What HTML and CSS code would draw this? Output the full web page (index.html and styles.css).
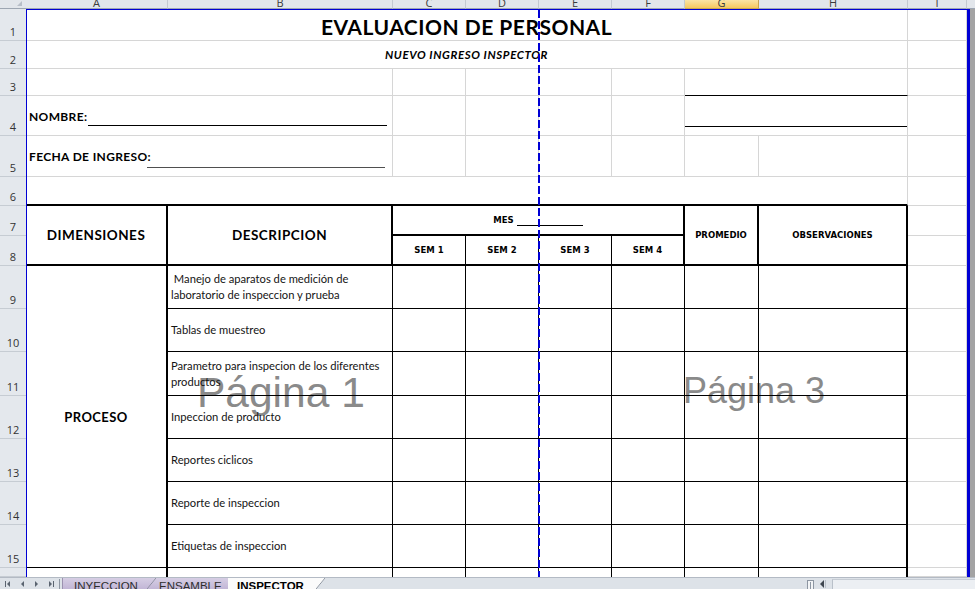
FILE: index.html
```html
<!DOCTYPE html>
<html lang="es">
<head>
<meta charset="utf-8">
<title>EVALUACION DE PERSONAL</title>
<link rel="stylesheet" href="styles.css">
</head>
<body>
<div class="app">
  <div class="viewport">
    <div class="colhdr">
      <div class="corner"><span class="tri"></span></div>
      <div class="ch">A</div>
      <div class="ch">B</div>
      <div class="ch">C</div>
      <div class="ch">D</div>
      <div class="ch">E</div>
      <div class="ch">F</div>
      <div class="ch sel">G</div>
      <div class="ch">H</div>
      <div class="ch">I</div>
      <div class="ch end"></div>
    </div>

    <div class="sheet">
      <!-- row 1 -->
      <div class="rh">1</div>
      <div class="c s8 title">EVALUACION DE PERSONAL</div>
      <div class="c"></div><div class="x"></div>
      <!-- row 2 -->
      <div class="rh">2</div>
      <div class="c s8 subtitle">NUEVO INGRESO INSPECTOR</div>
      <div class="c"></div><div class="x"></div>
      <!-- row 3 -->
      <div class="rh">3</div>
      <div class="c s2"></div>
      <div class="c"></div><div class="c"></div><div class="c"></div><div class="c"></div>
      <div class="c s2 blkb"></div>
      <div class="c"></div><div class="x"></div>
      <!-- row 4 -->
      <div class="rh">4</div>
      <div class="c s2 field f-name"><span class="lbl">NOMBRE:</span><span class="blank"></span></div>
      <div class="c"></div><div class="c"></div><div class="c"></div><div class="c"></div>
      <div class="c s2 sigline"><span></span></div>
      <div class="c"></div><div class="x"></div>
      <!-- row 5 -->
      <div class="rh">5</div>
      <div class="c s2 field f-date"><span class="lbl">FECHA DE INGRESO:</span><span class="blank"></span></div>
      <div class="c"></div><div class="c"></div><div class="c"></div><div class="c"></div>
      <div class="c"></div><div class="c"></div>
      <div class="c"></div><div class="x"></div>
      <!-- row 6 -->
      <div class="rh">6</div>
      <div class="c s8 topb"></div>
      <div class="c"></div><div class="x"></div>
      <!-- row 7 -->
      <div class="rh">7</div>
      <div class="c r2 t2 hd">DIMENSIONES</div>
      <div class="c r2 t2 hd">DESCRIPCION</div>
      <div class="c s4 t2 sm mes"><span>MES&nbsp;</span><span class="mesline"></span></div>
      <div class="c r2 t2 sm">PROMEDIO</div>
      <div class="c r2 t2 sm">OBSERVACIONES</div>
      <div class="c"></div><div class="x"></div>
      <!-- row 8 -->
      <div class="rh">8</div>
      <div class="c t1 sm">SEM 1</div>
      <div class="c t1 sm">SEM 2</div>
      <div class="c t1 sm">SEM 3</div>
      <div class="c t2 sm">SEM 4</div>
      <div class="c"></div><div class="x"></div>
      <!-- row 9 -->
      <div class="rh">9</div>
      <div class="c r7 ba proc">PROCESO</div>
      <div class="c b d">&nbsp;Manejo de aparatos de medición de<br>laboratorio de inspeccion y prueba</div>
      <div class="c b"></div><div class="c b"></div><div class="c b"></div><div class="c b"></div><div class="c b"></div>
      <div class="c b bh"></div>
      <div class="c"></div><div class="x"></div>
      <!-- row 10 -->
      <div class="rh">10</div>
      <div class="c b d">Tablas de muestreo</div>
      <div class="c b"></div><div class="c b"></div><div class="c b"></div><div class="c b"></div><div class="c b"></div>
      <div class="c b bh"></div>
      <div class="c"></div><div class="x"></div>
      <!-- row 11 -->
      <div class="rh">11</div>
      <div class="c b d">Parametro para inspecion de los diferentes<br>productos</div>
      <div class="c b"></div><div class="c b"></div><div class="c b"></div><div class="c b"></div><div class="c b"></div>
      <div class="c b bh"></div>
      <div class="c"></div><div class="x"></div>
      <!-- row 12 -->
      <div class="rh">12</div>
      <div class="c b d">Inpeccion de producto</div>
      <div class="c b"></div><div class="c b"></div><div class="c b"></div><div class="c b"></div><div class="c b"></div>
      <div class="c b bh"></div>
      <div class="c"></div><div class="x"></div>
      <!-- row 13 -->
      <div class="rh">13</div>
      <div class="c b d">Reportes ciclicos</div>
      <div class="c b"></div><div class="c b"></div><div class="c b"></div><div class="c b"></div><div class="c b"></div>
      <div class="c b bh"></div>
      <div class="c"></div><div class="x"></div>
      <!-- row 14 -->
      <div class="rh">14</div>
      <div class="c b d">Reporte de inspeccion</div>
      <div class="c b"></div><div class="c b"></div><div class="c b"></div><div class="c b"></div><div class="c b"></div>
      <div class="c b bh"></div>
      <div class="c"></div><div class="x"></div>
      <!-- row 15 -->
      <div class="rh">15</div>
      <div class="c b d">Etiquetas de inspeccion</div>
      <div class="c b"></div><div class="c b"></div><div class="c b"></div><div class="c b"></div><div class="c b"></div>
      <div class="c b bh"></div>
      <div class="c"></div><div class="x"></div>
      <!-- row 16 (partial) -->
      <div class="rh"></div>
      <div class="c ba nb"></div>
      <div class="c b nb"></div>
      <div class="c b nb"></div><div class="c b nb"></div><div class="c b nb"></div><div class="c b nb"></div><div class="c b nb"></div>
      <div class="c b bh nb"></div>
      <div class="c"></div><div class="x"></div>
    </div>

    <div class="wm wm1">Página 1</div>
    <div class="wm wm3">Página 3</div>
    <div class="printarea"></div>
    <div class="pagebreak"></div>
  </div>

  <div class="tabbar">
    <svg class="nav" width="58" height="11" viewBox="0 0 58 11">
      <rect x="5" y="3" width="1" height="6" fill="#5b6470"/>
      <polygon points="10,3 10,9 7,6" fill="#5b6470"/>
      <polygon points="24,3 24,9 21,6" fill="#5b6470"/>
      <polygon points="35,3 35,9 38,6" fill="#5b6470"/>
      <polygon points="49,3 49,9 52,6" fill="#5b6470"/>
      <rect x="53" y="3" width="1" height="6" fill="#5b6470"/>
    </svg>
    <span class="navsep"></span>
    <div class="tab tab1">INYECCION</div>
    <div class="tab tab2">ENSAMBLE</div>
    <div class="tab tab3">INSPECTOR</div>
    <div class="spacer"></div>
    <div class="split"><span></span></div>
    <svg class="larr" width="7" height="11" viewBox="0 0 7 11">
      <polygon points="5,2 5,10 1,6" fill="#3f4650"/>
      <rect x="6" y="2" width="1" height="8" fill="#b9c0c9"/>
    </svg>
    <div class="hscroll"></div>
  </div>
</div>
</body>
</html>
```

FILE: styles.css
```css
:root {
  --cols: 26px 142px 225px 73px 73px 73px 73px 74px 149px 59px 8px;
  --grid: #d6d6d6;
  --blue: #0000d4;
}

* { box-sizing: border-box; }

html, body {
  margin: 0;
  padding: 0;
}

body {
  width: 975px;
  height: 589px;
  overflow: hidden;
  background: #ffffff;
  font-family: "Lato", "Liberation Sans", sans-serif;
  color: #000;
}

.app {
  display: flex;
  flex-direction: column;
  width: 975px;
  height: 589px;
}

.viewport {
  position: relative;
  height: 577px;
  overflow: hidden;
  background: #ffffff;
}

/* ---------- column headers ---------- */
.colhdr {
  position: relative;
  z-index: 1;
  display: grid;
  grid-template-columns: var(--cols);
  height: 9px;
}

.corner,
.ch {
  height: 9px;
  background: #e2e6eb;
  border-right: 1px solid #c3c9d1;
  border-bottom: 1px solid #9da6b2;
  overflow: hidden;
}

.corner {
  display: flex;
  align-items: flex-end;
  justify-content: flex-end;
  padding: 0 4px 2px 0;
  border-right: none;
}

.tri {
  width: 0;
  height: 0;
  border-left: 5px solid transparent;
  border-bottom: 5px solid #b7bec8;
}

.ch {
  display: flex;
  justify-content: center;
  align-items: flex-end;
  font-family: "Open Sans", "Liberation Sans", sans-serif;
  font-size: 11px;
  line-height: 11px;
  color: #3c3c3c;
}

.ch.sel {
  background: linear-gradient(#fbe4a6, #f6c860);
  border-right-color: #c9a552;
  border-bottom-color: #c9a552;
}

.ch.end { border-right: none; }

/* ---------- sheet grid ---------- */
.sheet {
  position: relative;
  z-index: 1;
  display: grid;
  grid-template-columns: var(--cols);
  grid-template-rows: 32px 28px 27px 40px 41px 29px 30px 30px 43px 43px 44px 43px 43px 43px 43px 9px;
}

.rh {
  background: #e4e8ed;
  border-bottom: 1px solid #c6ccd3;
  display: flex;
  justify-content: center;
  align-items: flex-end;
  padding-bottom: 2px;
  font-family: "Open Sans", "Liberation Sans", sans-serif;
  font-size: 11px;
  line-height: 12px;
  color: #333;
}

.c {
  min-width: 0;
  border-right: 1px solid var(--grid);
  border-bottom: 1px solid var(--grid);
}

.x { background: #a3a3a3; }

.s2 { grid-column: span 2; }
.s4 { grid-column: span 4; }
.s8 { grid-column: span 8; }
.r2 { grid-row: span 2; }
.r7 { grid-row: span 7; }

/* titles */
.title {
  display: flex;
  justify-content: center;
  align-items: center;
  padding-top: 3px;
  font-weight: 700;
  font-size: 21px;
  letter-spacing: 0.5px;
}

.subtitle {
  display: flex;
  justify-content: center;
  align-items: center;
  font-weight: 700;
  font-style: italic;
  font-size: 11.5px;
  letter-spacing: 0.6px;
}

/* form fields */
.blkb { border-bottom-color: #000; }

.field {
  display: flex;
  align-items: flex-end;
  padding-left: 3px;
}

.lbl {
  font-weight: 700;
  font-size: 12px;
  line-height: 14px;
  letter-spacing: 0.35px;
  white-space: nowrap;
}

.blank {
  flex: 1;
  height: 1px;
  background: #000;
}

.f-name { padding-bottom: 11px; padding-right: 5px; }
.f-name .blank { margin: 0 0 -2px 1px; }

.f-date { padding-bottom: 12px; padding-right: 7px; }
.f-date .blank { margin: 0 0 -4px -4px; background: #4f4f4f; }

.sigline { padding-top: 30px; }
.sigline span {
  display: block;
  width: 222px;
  height: 1px;
  background: #000;
}

.topb { border-bottom: 2px solid #000; }

/* table header */
.t2 {
  border-right: 2px solid #000;
  border-bottom: 2px solid #000;
}

.t1 {
  border-right: 1px solid #000;
  border-bottom: 2px solid #000;
}

.hd {
  display: flex;
  justify-content: center;
  align-items: center;
  font-weight: 700;
  font-size: 13.5px;
  letter-spacing: 0.5px;
}

.sm {
  display: flex;
  justify-content: center;
  align-items: center;
  font-family: "DejaVu Sans", "Liberation Sans", sans-serif;
  font-weight: 700;
  font-size: 8.5px;
}

.mes span { white-space: pre; }

.mesline {
  display: inline-block;
  width: 66px;
  height: 1px;
  background: #000;
  margin-top: 11px;
}

/* table body */
.b {
  border-right: 1px solid #000;
  border-bottom: 1px solid #000;
}

.bh { border-right-width: 2px; }

.ba {
  border-right: 2px solid #000;
  border-bottom: 1px solid #000;
}

.nb { border-bottom: none; }

.proc {
  display: flex;
  justify-content: center;
  align-items: center;
  font-weight: 700;
  font-size: 13px;
  letter-spacing: 0.4px;
}

.d {
  display: flex;
  align-items: center;
  padding-left: 3px;
  font-size: 11.2px;
  line-height: 16px;
  color: #141414;
  white-space: nowrap;
}

/* ---------- overlays ---------- */
.wm {
  position: absolute;
  z-index: 0;
  font-family: "Liberation Sans", Arial, sans-serif;
  line-height: 1;
  color: #8a8a8a;
  white-space: nowrap;
}

.wm1 { left: 197px; top: 372px; font-size: 42.5px; }
.wm3 { left: 683px; top: 373px; font-size: 36px; }

.printarea {
  position: absolute;
  z-index: 2;
  left: 26px;
  top: 9px;
  width: 944px;
  height: 568px;
  border-top: 1px solid var(--blue);
  border-left: 1px solid var(--blue);
  border-right: 3px solid var(--blue);
}

.pagebreak {
  position: absolute;
  z-index: 3;
  left: 538px;
  top: 10px;
  width: 2px;
  height: 567px;
  background: repeating-linear-gradient(to bottom, var(--blue) 0 8px, transparent 8px 11px);
}

/* ---------- sheet tabs bar ---------- */
.tabbar {
  display: flex;
  align-items: stretch;
  height: 12px;
  background: #dde2e8;
  border-top: 1px solid #b3bac4;
  font-family: "Liberation Sans", Arial, sans-serif;
}

.nav {
  flex: none;
  display: block;
}

.navsep {
  flex: none;
  width: 1px;
  margin: 1px 2px 0 1px;
  background: #8d96a2;
}

.tab {
  position: relative;
  flex: none;
  padding-top: 2px;
  font-size: 11.5px;
  line-height: 12px;
  color: #2e2e2e;
  white-space: nowrap;
  overflow: visible;
  background: linear-gradient(#d6cee4, #c2b6d6);
}

.tab1 {
  width: 90px;
  padding-left: 11px;
  border-left: 1px solid #9c92b0;
}

.tab2 {
  width: 76px;
  padding-left: 7px;
}

.tab2::before {
  content: "";
  position: absolute;
  left: -5px;
  top: 0;
  width: 9px;
  height: 100%;
  background: linear-gradient(to bottom right, transparent calc(50% - 0.7px), #8d8fa0 50%, transparent calc(50% + 0.7px));
}

.tab3 {
  width: 88px;
  padding-left: 9px;
  background: #fbfbfb;
  font-weight: 700;
  font-size: 11.5px;
  color: #000;
}

.tab3::after {
  content: "";
  position: absolute;
  right: -9px;
  top: 0;
  width: 9px;
  height: 100%;
  background: linear-gradient(to bottom right, #fbfbfb calc(50% - 0.7px), #8f96a1 50%, transparent calc(50% + 0.7px));
}

.spacer { flex: 1; }

.split {
  flex: none;
  width: 7px;
  margin: 2px 5px 0 0;
  border: 1px solid #8d96a2;
  border-bottom: none;
  background: #f2f4f6;
  display: flex;
  justify-content: center;
}

.split span {
  width: 1px;
  margin-top: 1px;
  background: #8d96a2;
}

.larr {
  flex: none;
  display: block;
  margin-right: 6px;
}

.hscroll {
  flex: none;
  width: 143px;
  margin-top: 1px;
  background: #eceff3;
  border-left: 1px solid #b9c0c9;
  border-top: 1px solid #c6ccd4;
}
```
